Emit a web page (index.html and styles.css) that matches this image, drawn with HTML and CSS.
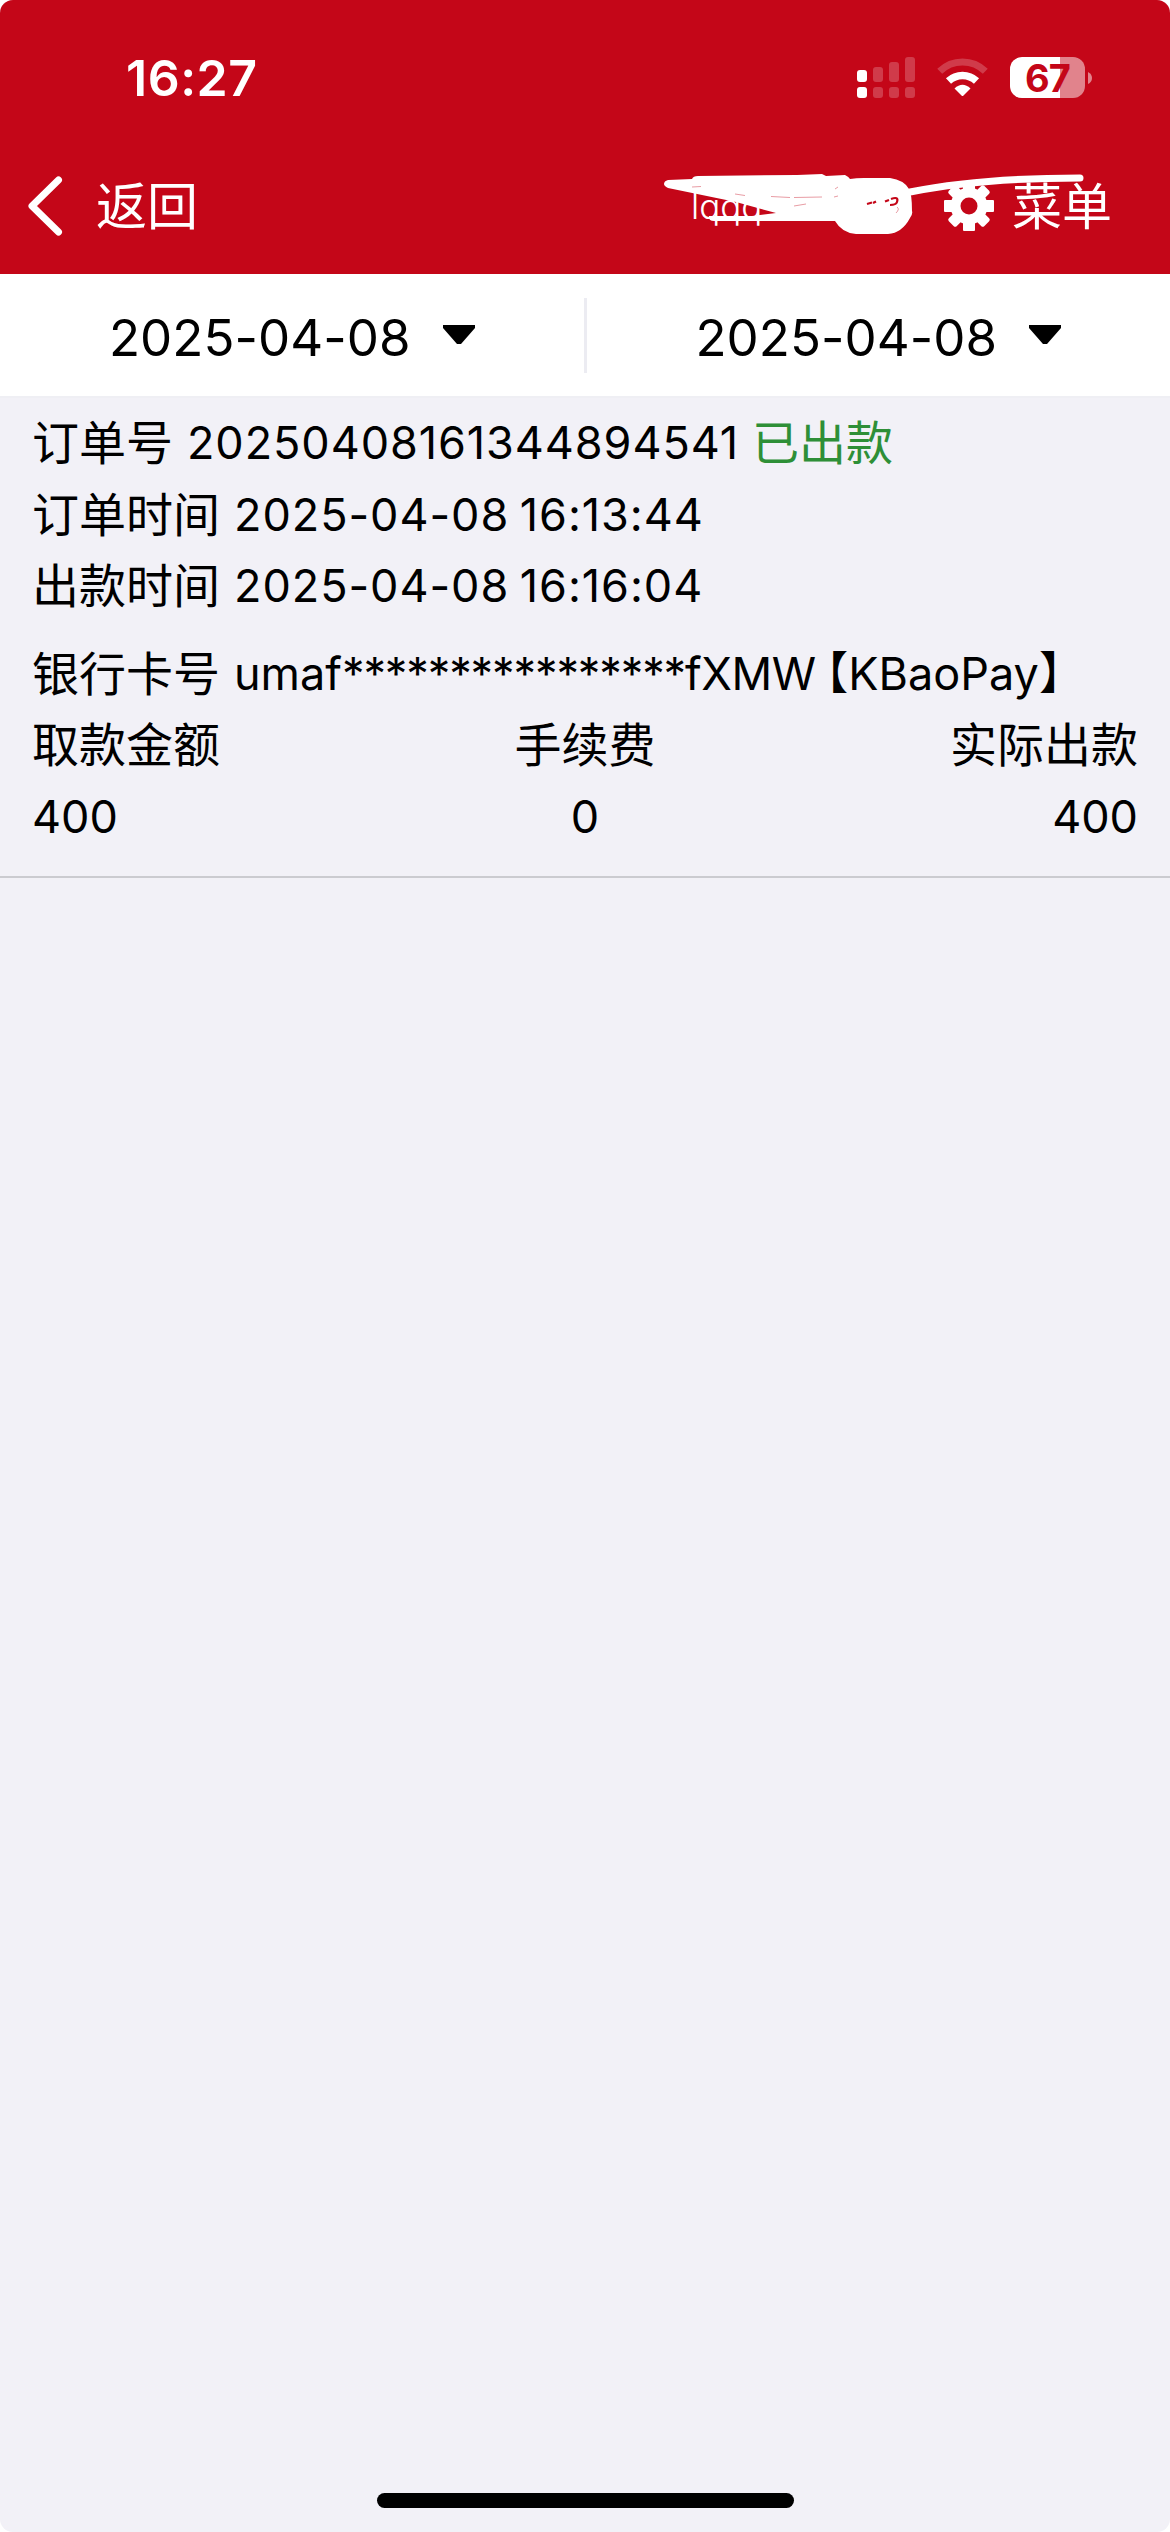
FILE: index.html
```html
<!DOCTYPE html>
<html lang="zh-CN">
<head>
<meta charset="utf-8">
<title>取款记录</title>
<link rel="stylesheet" href="styles.css">
</head>
<body>
<div class="screen">
  <header class="top">
    <div class="status">
      <span class="clock">16:27</span>
      <div class="indicators">
        <svg class="signal" width="58" height="42" viewBox="0 0 58 42">
          <g fill="#fff"><rect x="0" y="13" width="10" height="12" rx="3"/><rect x="0" y="30" width="10" height="11" rx="3"/></g>
          <g fill="#d03b4a"><rect x="16" y="10" width="10" height="15" rx="3"/><rect x="16" y="30" width="10" height="11" rx="3"/><rect x="32" y="5" width="10" height="20" rx="3"/><rect x="32" y="30" width="10" height="11" rx="3"/><rect x="48" y="0" width="10" height="25" rx="3"/><rect x="48" y="30" width="10" height="11" rx="3"/></g>
        </svg>
        <svg class="wifi" width="51" height="42" viewBox="0 0 51 42">
          <path d="M2.700 14.300A32.500 32.500 0 0 1 48.300 14.300" fill="none" stroke="#d03b4a" stroke-width="7"/>
          <path d="M11.500 24A20.500 20.500 0 0 1 39.500 24" fill="none" stroke="#fff" stroke-width="7.500"/>
          <path d="M17.500 31.500Q25.500 24 33.500 31.500L26.500 38.500Q25.500 39.500 24.500 38.500Z" fill="#fff"/>
        </svg>
        <div class="battery"><div class="cell">67</div><svg width="4" height="12" viewBox="0 0 4 12"><path d="M0 0Q4 2 4 6T0 12Z" fill="#e1838c"/></svg></div>
      </div>
    </div>
    <nav class="nav">
      <a class="back">
        <svg width="36" height="60" viewBox="0 0 36 60"><path d="M31.500 4L5 30L31.500 56" fill="none" stroke="#fff" stroke-width="7" stroke-linecap="round" stroke-linejoin="round"/></svg>
        <span>返回</span>
      </a>
      <div class="account">
        <span class="user">lqqq</span>
        <svg class="gear" width="50" height="50" viewBox="-25 -25 50 50">
          <g fill="#fff">
            <rect x="-6" y="-25" width="12" height="50" rx="1"/><rect x="-25" y="-6" width="50" height="12" rx="1"/>
            <rect x="-5.500" y="-25" width="11" height="50" rx="2" transform="rotate(45)"/><rect x="-5.500" y="-25" width="11" height="50" rx="2" transform="rotate(-45)"/>
            <circle r="18.500"/>
          </g>
          <circle r="8.500" fill="#c40618"/>
        </svg>
        <span class="menu">菜单</span>
      </div>
      <svg class="scribble" width="430" height="70" viewBox="660 170 430 70">
        <path fill="#fff" d="M668 180L692 179Q693 176 698 176L797 175L822 174L826 176L845 175Q849 177 850 179Q856 178 864 178H890Q904 180 909 189Q912 194 912 211Q913 214 910 218Q902 233 888 234H856Q842 233 835 221H714Q708 221 709 216H752L776 213L736 202L668 188Q664 186 664 184Q664 181 668 180Z"/>
        <path d="M910 192C960 182 1020 178 1080 178" fill="none" stroke="#fff" stroke-width="7" stroke-linecap="round"/>
        <g fill="none" stroke="#c40618">
          <path d="M735 194L745 195.500M771 196.500L790 197.500M794 197.500L822 197M834 197L838 196M794 206L806 204" stroke-width=".4"/>
          <path d="M867 204L872 202.500M873 203L876 201.500M885 201.500L889 200" stroke-width="2.200"/>
          <path d="M891 199Q899 196 897 202Q896 205 890 205" stroke-width="2.200"/>
          <path d="M692 187L701 186.500M897 207Q900 209 896 213M838 187L835 189" stroke-width=".4"/>
        </g>
      </svg>
    </nav>
  </header>

  <section class="dates">
    <div class="date"><span>2025-04-08</span><svg width="32" height="20" viewBox="0 0 32 20"><path d="M0 0H32V3L18 19H14L0 3Z"/></svg></div>
    <div class="date"><span>2025-04-08</span><svg width="32" height="20" viewBox="0 0 32 20"><path d="M0 0H32V3L18 19H14L0 3Z"/></svg></div>
  </section>

  <article class="order">
    <p><span class="label">订单号</span><span class="number">20250408161344894541</span><span class="paid">已出款</span></p>
    <p><span class="label">订单时间</span><span class="stamp">2025-04-08 16:13:44</span></p>
    <p><span class="label">出款时间</span><span class="stamp">2025-04-08 16:16:04</span></p>
    <p class="card"><span class="label">银行卡号</span><span class="owner">umaf</span><span class="stars">****************</span><span class="tail">fXMW</span><span class="open">【</span><span class="bank">KBaoPay】</span></p>
    <div class="amounts">
      <div><span>取款金额</span><span>400</span></div>
      <div><span>手续费</span><span>0</span></div>
      <div><span>实际出款</span><span>400</span></div>
    </div>
  </article>
  <div class="home"></div>
</div>
</body>
</html>
```
FILE: styles.css
```css
* { box-sizing: border-box; }
body { margin: 0; background: #fff; }
p { margin: 0; }
svg { display: block; flex: none; }
.screen {
  width: 1170px; height: 2532px; border-radius: 13px; overflow: hidden;
  background: #f2f1f7; color: #000; display: flex; flex-direction: column;
  font-family: Inter, "Noto Sans CJK SC", sans-serif; font-size: 45px;
}
.top { height: 274px; background: #c40618; color: #fff; }
.status { height: 138px; padding: 57px 78px 0 126px; display: flex; justify-content: space-between; align-items: flex-start; }
.clock { font-size: 50px; font-weight: 600; line-height: 42px; letter-spacing: .5px; }
.indicators { display: flex; }
.wifi { margin-left: 22px; }
.battery { margin-left: 22px; display: flex; align-items: center; gap: 3px; height: 41px; }
.cell {
  width: 75px; height: 41px; border-radius: 12px; text-align: center; line-height: 42px;
  background: linear-gradient(90deg, #fff 50px, #e1838c 50px); color: #c40618;
  font-size: 38px; font-weight: 700; letter-spacing: -1px;
}
.nav { position: relative; height: 136px; padding: 0 58px 0 27px; display: flex; justify-content: space-between; align-items: center; }
.back { display: flex; align-items: center; gap: 33px; font-size: 51px; font-weight: 400; line-height: 60px; }
.back span, .menu { padding-top: 2px; }
.account { display: flex; align-items: center; font-size: 50px; font-weight: 400; line-height: 60px; }
.user { font-size: 35px; font-weight: 300; width: 253px; }
.gear { margin-right: 18px; }
.scribble { position: absolute; left: 660px; top: 32px; }
.dates { height: 124px; background: #fff; border-bottom: 2px solid #efeff4; display: flex; align-items: center; }
.date { flex: 1; height: 75px; display: flex; align-items: center; justify-content: center; gap: 32px; font-size: 51px; line-height: 77px; }
.date span { padding-top: 4px; letter-spacing: .05px; }
.date + .date { border-left: 3px solid #ececf2; }
.order { height: 480px; padding: 9px 32px 0; border-bottom: 2px solid #cbcbd0; line-height: 71.5px; }
.order p { display: flex; height: 71.5px; white-space: pre; }
.label { margin-right: 14px; font-size: 47px; }
.number { letter-spacing: .93px; }
.stamp { letter-spacing: .95px; word-spacing: -3px; }
.stars { letter-spacing: -1.1px; }
.tail { letter-spacing: -.4px; }
.open { margin-left: 10px; font-feature-settings: "halt"; }
.paid { margin-left: 13px; color: #2e8f37; font-size: 47px; }
.order .card { margin-top: 16px; }
.amounts { display: grid; grid-template-columns: 1fr 1fr 1fr; }
.amounts div { display: flex; flex-direction: column; align-items: center; }
.amounts div:first-child { align-items: flex-start; }
.amounts div:last-child { align-items: flex-end; }
.amounts span { height: 71.5px; }
.amounts span:first-child { font-size: 47px; }
.home { width: 417px; height: 15px; border-radius: 8px; background: #000; margin: auto auto 24px; }
```
